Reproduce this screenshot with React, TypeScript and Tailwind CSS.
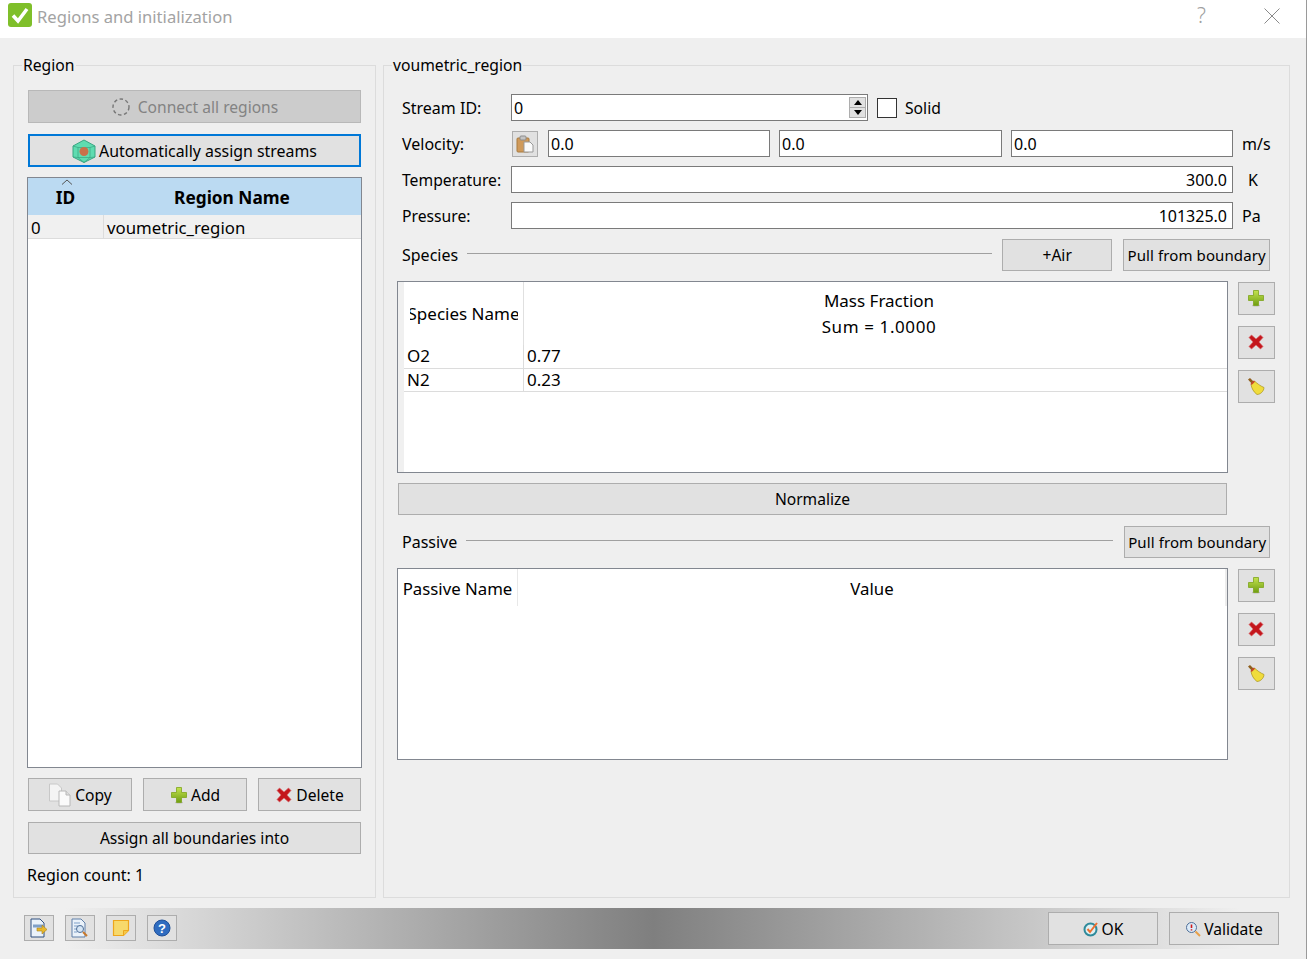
import type { ReactNode } from "react";

const PlusIcon = ({ size = 18 }: { size?: number }) => (
  <svg width={size} height={size} viewBox="0 0 18 18">
    <defs>
      <linearGradient id="plusG" x1="0" y1="0" x2="0" y2="1">
        <stop offset="0" stopColor="#c4e34f" />
        <stop offset="1" stopColor="#6f9e12" />
      </linearGradient>
    </defs>
    <ellipse cx="9" cy="16.5" rx="4" ry="1" fill="#bbb" />
    <path d="M6.5 1.5h5v5h5v5h-5v5h-5v-5h-5v-5h5z" fill="url(#plusG)" stroke="#7da51c" strokeWidth="0.8" />
  </svg>
);

const CrossIcon = ({ size = 18 }: { size?: number }) => (
  <svg width={size} height={size} viewBox="0 0 18 18">
    <path d="M2 4.5 4.5 2 9 6l4.5-4L16 4.5 12 9l4 4.5-2.5 2.5L9 12l-4.5 4L2 13.5 6 9z" fill="#c4161c" stroke="#d9686c" strokeWidth="0.7" />
  </svg>
);

const BroomIcon = () => (
  <svg width="18" height="18" viewBox="0 0 18 18">
    <path d="M1 2.5 3 1 7 5 5 7z" fill="#8f5f1c" />
    <path d="M4 7.5 7.5 4C10 6.5 13.5 9 17 10.5 17 14 13.5 17.5 10 17.5 6.5 15 4.5 11 4 7.5z" fill="#f0dc3c" stroke="#a8921a" strokeWidth="0.7" />
    <path d="M3.5 6.8 6.8 3.5 8 4.7 4.7 8z" fill="#c8452a" />
  </svg>
);

const BoxIcon = () => (
  <svg width="24" height="24" viewBox="0 0 24 24">
    <path d="M12 1 23 7v11l-11 5.5L1 18V7z" fill="#5fdcb0" stroke="#3aa582" />
    <path d="M1 7l5 1.5h12L23 7M6 8.5v10L1 18M18 8.5v10l5-.5M6 18.5h12l-6 5z" fill="none" stroke="#3aa582" strokeWidth="0.7" />
    <circle cx="12" cy="12.5" r="4.5" fill="#c9704a" />
  </svg>
);

const CopyIcon = () => (
  <svg width="24" height="24" viewBox="0 0 24 24">
    <path d="M1.5 1h8l4 4v13h-12z" fill="#f4f4f4" stroke="#c8c8c8" />
    <path d="M11 8h7l4 4v11H11z" fill="#fafafa" stroke="#b8b8b8" />
    <path d="M18 8v4h4" fill="#ddd" stroke="#b8b8b8" />
  </svg>
);

const ClipboardIcon = () => (
  <svg width="18" height="18" viewBox="0 0 18 18">
    <rect x="1" y="3" width="12" height="14" rx="1" fill="#d09a5a" stroke="#a87a3e" />
    <rect x="4" y="1" width="6" height="4" rx="1" fill="#c4c4c4" stroke="#8c8c8c" />
    <path d="M8 7h6l3 3v7H8z" fill="#fafafa" stroke="#999" />
  </svg>
);

const DocArrowIcon = () => (
  <svg width="18" height="20" viewBox="0 0 18 20">
    <path d="M1 1h9l4 4v14H1z" fill="#eaf2fa" stroke="#2f4f7f" />
    <path d="M3 8h10" stroke="#7fa0c8" strokeWidth="3" />
    <path d="M7 10h5V7l5 4.5-5 4.5v-3H7z" fill="#e8b82c" stroke="#a8821a" strokeWidth="0.6" />
  </svg>
);

const DocSearchIcon = () => (
  <svg width="18" height="20" viewBox="0 0 18 20">
    <path d="M1 1h9l4 4v14H1z" fill="#eaf2fa" stroke="#5f7fa8" />
    <path d="M3 5h6M3 8h8M3 11h3M3 14h3" stroke="#7fa0c8" />
    <circle cx="9" cy="11" r="3.5" fill="#d6e6f5" stroke="#4f6f98" />
    <path d="M12 14l4 4" stroke="#c8782a" strokeWidth="2" />
  </svg>
);

const NoteIcon = () => (
  <svg width="18" height="18" viewBox="0 0 18 18">
    <path d="M1.5 1.5h15v10l-5 5h-10z" fill="#f7d96b" stroke="#eea61c" strokeWidth="1.2" />
    <path d="M16.5 11.5h-5v5" fill="#f4c84a" stroke="#eea61c" />
  </svg>
);

const HelpIcon = () => (
  <svg width="18" height="18" viewBox="0 0 18 18">
    <circle cx="9" cy="9" r="8" fill="#2f6cc0" stroke="#1f4f98" />
    <text x="9" y="13.5" textAnchor="middle" fontSize="13" fontWeight="700" fill="#fff" fontFamily="Liberation Sans, sans-serif">?</text>
  </svg>
);

const OkIcon = () => (
  <svg width="16" height="16" viewBox="0 0 16 16">
    <circle cx="7.5" cy="8.5" r="6" fill="#dff0f2" stroke="#2f8a9a" strokeWidth="2" />
    <path d="M4.5 8 7 11l7-9" fill="none" stroke="#ef6f2e" strokeWidth="2" />
  </svg>
);

const ValidateIcon = () => (
  <svg width="16" height="16" viewBox="0 0 16 16">
    <circle cx="6.5" cy="6.5" r="5" fill="#dcebf8" stroke="#4f6f98" />
    <path d="M6.5 3.5V7M6.5 8.2v1.3" stroke="#d01818" strokeWidth="1.6" />
    <path d="M10.5 10.5l4.5 4.5" stroke="#e8a04a" strokeWidth="2" />
  </svg>
);

const Btn = ({ className = "", children }: { className?: string; children: ReactNode }) => (
  <div className={`flex items-center justify-center whitespace-nowrap border border-[#adadad] bg-[#e1e1e1] text-[15.6px] text-black ${className}`}>
    {children}
  </div>
);

const Label = ({ children }: { children: ReactNode }) => <span className="pt-[2px]">{children}</span>;

const Input = ({ className = "", value, right }: { className?: string; value: string; right?: boolean }) => (
  <div className={`flex h-[27px] items-center border border-[#7a7a7a] bg-white px-[2px] ${right ? "justify-end pr-[5px]" : ""} ${className}`}>
    {value}
  </div>
);

const SideButtons = () => (
  <div className="mt-[1px] flex flex-col gap-[11px]">
    <Btn className="h-[33px] w-[37px] pb-[2px] pr-[2px]"><PlusIcon /></Btn>
    <Btn className="h-[33px] w-[37px] pb-[2px] pr-[2px]"><CrossIcon /></Btn>
    <Btn className="h-[33px] w-[37px] pb-[2px] pr-[2px]"><BroomIcon /></Btn>
  </div>
);

const Group = ({ title, className = "", children }: { title: string; className?: string; children: ReactNode }) => (
  <div className={`relative h-[833px] border border-[#dcdcdc] ${className}`}>
    <span className="absolute left-[8px] top-[-12px] bg-[#efefef] px-[1px] text-[15.7px] leading-[22px]">{title}</span>
    {children}
  </div>
);

export default function App() {
  return (
    <div
      className="flex h-[959px] w-[1307px] flex-col overflow-hidden border-r border-[#9a9a9a] bg-[#efefef] text-[16px] text-black"
      style={{ fontFamily: '"Noto Sans", sans-serif' }}
    >
      <div className="flex h-[38px] items-start bg-white pl-[8px] pr-[26px] pt-[3px]">
        <svg width="24" height="24" viewBox="0 0 24 24">
          <rect width="24" height="24" rx="3" fill="#7fbf2a" />
          <path d="M5 12.5 10 18 19 6" fill="none" stroke="#fff" strokeWidth="3.5" />
        </svg>
        <span className="ml-[5px] text-[16.6px] leading-[28px] text-[#a3a3a3]">Regions and initialization</span>
        <span className="ml-auto mr-[58px] text-[21px] font-light leading-[24px] text-[#a0a0a0]">?</span>
        <svg className="mt-[5px]" width="16" height="16" viewBox="0 0 16 16">
          <path d="M0.5 0.5l15 15M15.5 0.5l-15 15" stroke="#8a8a8a" strokeWidth="1" />
        </svg>
      </div>

      <div className="mt-[27px] flex gap-[7px] pl-[13px]">
        <Group title="Region" className="w-[363px]">
          <div className="flex h-full flex-col pl-[14px] pr-[14px] pt-[24px]">
            <div className="flex h-[33px] items-center justify-center gap-[7px] border border-[#b8b8b8] bg-[#cccccc] text-[15.6px] text-[#838383]">
              <svg width="20" height="18" viewBox="0 0 20 18">
                <circle cx="10" cy="9" r="8" fill="none" stroke="#777" strokeWidth="1.4" strokeDasharray="3.5 2.5" />
              </svg>
              <Label>Connect all regions</Label>
            </div>
            <div className="mt-[11px] flex h-[33px] items-center justify-center gap-[3px] border-2 border-[#0078d7] bg-[#e1e1e1] text-[15.9px]">
              <BoxIcon />
              <Label>Automatically assign streams</Label>
            </div>
            <div className="ml-[-1px] mr-[-1px] mt-[10px] flex h-[591px] flex-col border border-[#828790] bg-white text-[16.8px]">
              <div className="relative flex h-[37px] items-center bg-[#bbdaf2] pt-[2px] text-[17.3px] font-bold">
                <span className="w-[75px] text-center">ID</span>
                <span className="flex-1 text-center">Region Name</span>
                <svg className="absolute left-[33px] top-[1px]" width="12" height="6" viewBox="0 0 12 6">
                  <path d="M1 5.5 6 1l5 4.5" fill="none" stroke="#555" />
                </svg>
              </div>
              <div className="flex h-[24px] items-center border-b border-[#dcdcdc] bg-[#f0f0f0]">
                <span className="flex h-full w-[76px] items-center border-r border-[#dcdcdc] pl-[3px] pt-[2px]">0</span>
                <span className="pl-[3px] pt-[2px]">voumetric_region</span>
              </div>
            </div>
            <div className="mt-[10px] flex gap-[11px]">
              <Btn className="h-[33px] w-[104px] gap-[3px]"><CopyIcon /><Label>Copy</Label></Btn>
              <Btn className="h-[33px] w-[104px] gap-[3px]"><PlusIcon /><Label>Add</Label></Btn>
              <Btn className="h-[33px] flex-1 gap-[3px]"><CrossIcon /><Label>Delete</Label></Btn>
            </div>
            <Btn className="mt-[11px] h-[32px] pt-[1px]">Assign all boundaries into</Btn>
            <div className="ml-[-1px] mt-[10px] leading-[22px]">Region count: 1</div>
          </div>
        </Group>

        <Group title="voumetric_region" className="w-[907px]">
          <div className="flex flex-col pl-[13px] pt-[28px]">
            <div className="flex h-[27px] items-center pl-[5px]">
              <span className="w-[109px]">Stream ID:</span>
              <div className="flex h-[27px] w-[357px] items-center justify-between border border-[#7a7a7a] bg-white pl-[2px] pr-[1px]">
                0
                <div className="flex h-[21px] w-[17px] flex-col border border-[#adadad] bg-[#e1e1e1]">
                  <div className="flex flex-1 items-center justify-center border-b border-[#adadad]">
                    <div className="h-0 w-0 border-x-[4px] border-b-[5px] border-x-transparent border-b-black" />
                  </div>
                  <div className="flex flex-1 items-center justify-center">
                    <div className="h-0 w-0 border-x-[4px] border-t-[5px] border-x-transparent border-t-black" />
                  </div>
                </div>
              </div>
              <div className="ml-[9px] h-[20px] w-[20px] border border-[#333] bg-white" />
              <span className="ml-[8px] pt-[2px] text-[15.7px]">Solid</span>
            </div>

            <div className="mt-[9px] flex h-[27px] items-center pl-[5px]">
              <span className="w-[110px]">Velocity:</span>
              <Btn className="h-[26px] w-[26px]"><ClipboardIcon /></Btn>
              <Input className="ml-[10px] w-[222px]" value="0.0" />
              <Input className="ml-[9px] w-[223px]" value="0.0" />
              <Input className="ml-[9px] w-[222px]" value="0.0" />
              <span className="ml-[9px]">m/s</span>
            </div>

            <div className="mt-[9px] flex h-[27px] items-center pl-[5px]">
              <span className="w-[109px] pt-[2px] text-[15.7px]">Temperature:</span>
              <Input className="w-[722px]" value="300.0" right />
              <span className="ml-[15px]">K</span>
            </div>

            <div className="mt-[9px] flex h-[27px] items-center pl-[5px]">
              <span className="w-[109px] pt-[2px] text-[15.7px]">Pressure:</span>
              <Input className="w-[722px]" value="101325.0" right />
              <span className="ml-[9px]">Pa</span>
            </div>

            <div className="mt-[10px] flex h-[32px] items-center pl-[5px]">
              <span>Species</span>
              <div className="mb-[4px] ml-[9px] h-px w-[525px] bg-[#a0a0a0]" />
              <Btn className="ml-[10px] h-[32px] w-[110px] pt-[1px]">+Air</Btn>
              <Btn className="ml-[11px] h-[32px] w-[147px] pt-[1px] text-[15px] tracking-[0.1px]">Pull from boundary</Btn>
            </div>

            <div className="mt-[10px] flex gap-[10px]">
              <div className="flex h-[192px] w-[831px] border border-[#828790] bg-white text-[17px]">
                <div className="w-[6px] bg-[#f0f0f0]" />
                <div className="flex flex-1 flex-col">
                  <div className="flex h-[63px]">
                    <div className="flex w-[120px] justify-center border-r border-[#e0e0e0]">
                      <div className="flex w-[108px] items-center justify-center overflow-hidden whitespace-nowrap">
                        Species Name
                      </div>
                    </div>
                    <div className="flex flex-1 flex-col items-center justify-center pl-[7px] leading-[26px]">
                      <span>Mass Fraction</span>
                      <span className="tracking-[0.6px]">Sum = 1.0000</span>
                    </div>
                  </div>
                  <div className="flex h-[24px] items-center border-b border-[#dcdcdc]">
                    <span className="flex h-full w-[120px] items-center border-r border-[#dcdcdc] pb-[1px] pl-[3px]">O2</span>
                    <span className="pb-[1px] pl-[3px]">0.77</span>
                  </div>
                  <div className="flex h-[23px] items-center border-b border-[#dcdcdc]">
                    <span className="flex h-full w-[120px] items-center border-r border-[#dcdcdc] pl-[3px]">N2</span>
                    <span className="pl-[3px]">0.23</span>
                  </div>
                </div>
              </div>
              <SideButtons />
            </div>

            <Btn className="ml-[1px] mt-[10px] h-[32px] w-[829px] pt-[1px]">Normalize</Btn>

            <div className="mt-[11px] flex h-[32px] items-center pl-[5px]">
              <span>Passive</span>
              <div className="mb-[4px] ml-[9px] h-px w-[647px] bg-[#a0a0a0]" />
              <Btn className="ml-[11px] h-[32px] w-[146px] pt-[1px] text-[15px] tracking-[0.1px]">Pull from boundary</Btn>
            </div>

            <div className="mt-[10px] flex gap-[10px]">
              <div className="h-[192px] w-[831px] border border-[#828790] bg-white text-[16.8px]">
                <div className="flex h-[37px]">
                  <div className="flex w-[120px] items-center justify-center border-r border-[#e8e8e8] pt-[2px] whitespace-nowrap">Passive Name</div>
                  <div className="flex flex-1 items-center justify-center pl-[1px] pt-[2px]">Value</div>
                  <div className="w-[2px] bg-[#ececec]" />
                </div>
              </div>
              <SideButtons />
            </div>
          </div>
        </Group>
      </div>

      <div className="mt-[10px] flex h-[41px] items-center bg-[linear-gradient(to_right,#efefef_5%,#7f7f7f_50%,#efefef_95%)] pl-[24px]">
        <Btn className="mb-[2px] h-[26px] w-[30px]"><DocArrowIcon /></Btn>
        <Btn className="mb-[2px] ml-[11px] h-[26px] w-[30px]"><DocSearchIcon /></Btn>
        <Btn className="mb-[2px] ml-[11px] h-[26px] w-[30px]"><NoteIcon /></Btn>
        <Btn className="mb-[2px] ml-[11px] h-[26px] w-[30px]"><HelpIcon /></Btn>
        <Btn className="ml-auto h-[33px] w-[110px] gap-[3px]"><OkIcon /><Label>OK</Label></Btn>
        <Btn className="ml-[11px] mr-[27px] h-[33px] w-[110px] gap-[3px]"><ValidateIcon /><Label>Validate</Label></Btn>
      </div>
    </div>
  );
}
